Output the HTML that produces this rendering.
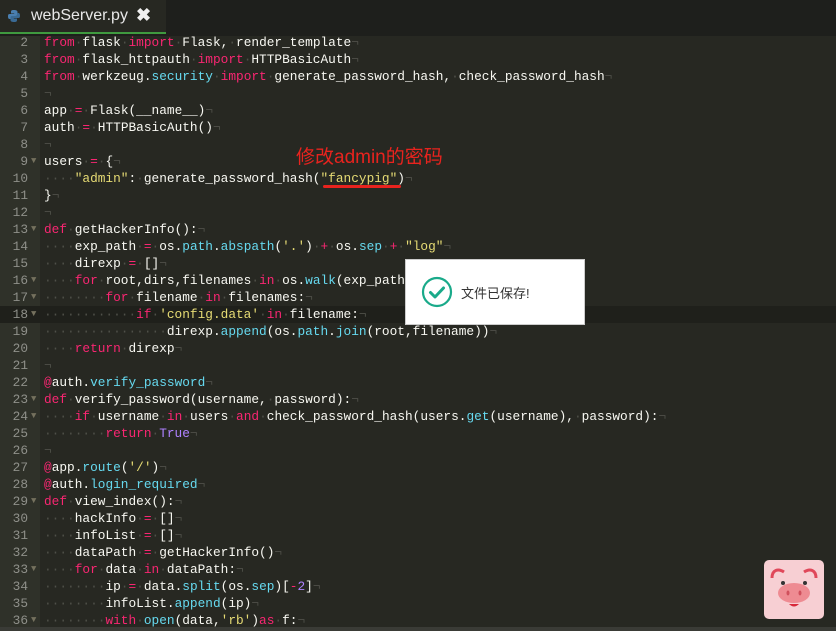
<!DOCTYPE html>
<html><head><meta charset="utf-8"><style>
*{margin:0;padding:0;box-sizing:border-box}
body{width:836px;height:631px;overflow:hidden;background:#272822;position:relative;font-family:"Liberation Mono",monospace}
.bar{position:absolute;left:0;top:0;width:836px;height:36px;background:#1e1f1c}
.tab{position:absolute;left:0;top:0;width:166px;height:34px;background:#272822;border-bottom:2px solid #3f9a3f}
.tab span{position:absolute;left:31px;top:7px;font:16px "Liberation Sans",sans-serif;color:#e8e8e8}
.tab b{position:absolute;left:136px;top:5px;font:bold 18px "Liberation Sans",sans-serif;color:#f0f0f0}
.gut{position:absolute;left:0;top:36px;width:40px;height:591px;background:#2f3129}
.hl{position:absolute;left:0;top:306px;width:836px;height:17px;background:#1f201b}
.code{position:absolute;left:0;top:34px;width:836px}
.l{height:17px;line-height:17px;font-size:12.8px;white-space:pre;position:relative;color:#f8f8f2}
.n{position:absolute;left:0;width:28px;text-align:right;color:#8f908a}
.a{position:absolute;left:31px;color:#75715e;font-size:9px}
.c{position:absolute;left:44px}
.k{color:#f92672}.f{color:#66d9ef}.s{color:#e6db74}.p{color:#ae81ff}.d{color:#4f5049}
.foot{position:absolute;left:0;top:627px;width:836px;height:4px;background:#3a3b36}
.note{position:absolute;left:296px;top:142px;font:19px "Liberation Sans","Noto Sans CJK SC",sans-serif;color:#e8231e}
.ul{position:absolute;left:323px;top:185px;width:78px;height:3px;background:#e8231e;border-radius:2px}
.toast{position:absolute;left:405px;top:259px;width:180px;height:66px;background:#fff;border:1px solid #ccc}
.toast span{position:absolute;left:55px;top:23px;font:13px "Liberation Sans","Noto Sans CJK SC",sans-serif;color:#333}
</style></head><body>
<div class="bar"></div>
<div class="tab"><svg style="position:absolute;left:7px;top:9px" width="14" height="14" viewBox="0 0 14 14"><path d="M7 1C4 1 4 2 4 3v1.5h3.2V5H2.5C1 5 1 6.5 1 7.5S1.3 10 2.5 10H4V8.5C4 7.5 5 7 6 7h3c1 0 1.5-.6 1.5-1.5V3C10.5 1.5 9 1 7 1z" fill="#4a7fb0"/><path d="M7 13c3 0 3-1 3-2V9.5H6.8V9h4.7c1.5 0 1.5-1.5 1.5-2.5S12.7 4 11.5 4H10v1.5c0 1-1 1.5-2 1.5H5c-1 0-1.5.6-1.5 1.5V11C3.5 12.5 5 13 7 13z" fill="#3a6a94"/></svg><span>webServer.py</span><b>✖</b></div>
<div class="gut"></div>
<div class="hl"></div>
<div class="code">
<div class="l"><span class="n">2</span><span class="c"><span class="k">from</span><span class="d">·</span>flask<span class="d">·</span><span class="k">import</span><span class="d">·</span>Flask,<span class="d">·</span>render_template<span class="d">¬</span></span></div>
<div class="l"><span class="n">3</span><span class="c"><span class="k">from</span><span class="d">·</span>flask_httpauth<span class="d">·</span><span class="k">import</span><span class="d">·</span>HTTPBasicAuth<span class="d">¬</span></span></div>
<div class="l"><span class="n">4</span><span class="c"><span class="k">from</span><span class="d">·</span>werkzeug.<span class="f">security</span><span class="d">·</span><span class="k">import</span><span class="d">·</span>generate_password_hash,<span class="d">·</span>check_password_hash<span class="d">¬</span></span></div>
<div class="l"><span class="n">5</span><span class="c"><span class="d">¬</span></span></div>
<div class="l"><span class="n">6</span><span class="c">app<span class="d">·</span><span class="k">=</span><span class="d">·</span>Flask(__name__)<span class="d">¬</span></span></div>
<div class="l"><span class="n">7</span><span class="c">auth<span class="d">·</span><span class="k">=</span><span class="d">·</span>HTTPBasicAuth()<span class="d">¬</span></span></div>
<div class="l"><span class="n">8</span><span class="c"><span class="d">¬</span></span></div>
<div class="l"><span class="n">9</span><span class="a">▼</span><span class="c">users<span class="d">·</span><span class="k">=</span><span class="d">·</span>{<span class="d">¬</span></span></div>
<div class="l"><span class="n">10</span><span class="c"><span class="d">····</span><span class="s">"admin"</span>:<span class="d">·</span>generate_password_hash(<span class="s">"fancypig"</span>)<span class="d">¬</span></span></div>
<div class="l"><span class="n">11</span><span class="c">}<span class="d">¬</span></span></div>
<div class="l"><span class="n">12</span><span class="c"><span class="d">¬</span></span></div>
<div class="l"><span class="n">13</span><span class="a">▼</span><span class="c"><span class="k">def</span><span class="d">·</span>getHackerInfo():<span class="d">¬</span></span></div>
<div class="l"><span class="n">14</span><span class="c"><span class="d">····</span>exp_path<span class="d">·</span><span class="k">=</span><span class="d">·</span>os.<span class="f">path</span>.<span class="f">abspath</span>(<span class="s">'.'</span>)<span class="d">·</span><span class="k">+</span><span class="d">·</span>os.<span class="f">sep</span><span class="d">·</span><span class="k">+</span><span class="d">·</span><span class="s">"log"</span><span class="d">¬</span></span></div>
<div class="l"><span class="n">15</span><span class="c"><span class="d">····</span>direxp<span class="d">·</span><span class="k">=</span><span class="d">·</span>[]<span class="d">¬</span></span></div>
<div class="l"><span class="n">16</span><span class="a">▼</span><span class="c"><span class="d">····</span><span class="k">for</span><span class="d">·</span>root,dirs,filenames<span class="d">·</span><span class="k">in</span><span class="d">·</span>os.<span class="f">walk</span>(exp_path):<span class="d">¬</span></span></div>
<div class="l"><span class="n">17</span><span class="a">▼</span><span class="c"><span class="d">········</span><span class="k">for</span><span class="d">·</span>filename<span class="d">·</span><span class="k">in</span><span class="d">·</span>filenames:<span class="d">¬</span></span></div>
<div class="l"><span class="n">18</span><span class="a">▼</span><span class="c"><span class="d">············</span><span class="k">if</span><span class="d">·</span><span class="s">'config.data'</span><span class="d">·</span><span class="k">in</span><span class="d">·</span>filename:<span class="d">¬</span></span></div>
<div class="l"><span class="n">19</span><span class="c"><span class="d">················</span>direxp.<span class="f">append</span>(os.<span class="f">path</span>.<span class="f">join</span>(root,filename))<span class="d">¬</span></span></div>
<div class="l"><span class="n">20</span><span class="c"><span class="d">····</span><span class="k">return</span><span class="d">·</span>direxp<span class="d">¬</span></span></div>
<div class="l"><span class="n">21</span><span class="c"><span class="d">¬</span></span></div>
<div class="l"><span class="n">22</span><span class="c"><span class="k">@</span>auth.<span class="f">verify_password</span><span class="d">¬</span></span></div>
<div class="l"><span class="n">23</span><span class="a">▼</span><span class="c"><span class="k">def</span><span class="d">·</span>verify_password(username,<span class="d">·</span>password):<span class="d">¬</span></span></div>
<div class="l"><span class="n">24</span><span class="a">▼</span><span class="c"><span class="d">····</span><span class="k">if</span><span class="d">·</span>username<span class="d">·</span><span class="k">in</span><span class="d">·</span>users<span class="d">·</span><span class="k">and</span><span class="d">·</span>check_password_hash(users.<span class="f">get</span>(username),<span class="d">·</span>password):<span class="d">¬</span></span></div>
<div class="l"><span class="n">25</span><span class="c"><span class="d">········</span><span class="k">return</span><span class="d">·</span><span class="p">True</span><span class="d">¬</span></span></div>
<div class="l"><span class="n">26</span><span class="c"><span class="d">¬</span></span></div>
<div class="l"><span class="n">27</span><span class="c"><span class="k">@</span>app.<span class="f">route</span>(<span class="s">'/'</span>)<span class="d">¬</span></span></div>
<div class="l"><span class="n">28</span><span class="c"><span class="k">@</span>auth.<span class="f">login_required</span><span class="d">¬</span></span></div>
<div class="l"><span class="n">29</span><span class="a">▼</span><span class="c"><span class="k">def</span><span class="d">·</span>view_index():<span class="d">¬</span></span></div>
<div class="l"><span class="n">30</span><span class="c"><span class="d">····</span>hackInfo<span class="d">·</span><span class="k">=</span><span class="d">·</span>[]<span class="d">¬</span></span></div>
<div class="l"><span class="n">31</span><span class="c"><span class="d">····</span>infoList<span class="d">·</span><span class="k">=</span><span class="d">·</span>[]<span class="d">¬</span></span></div>
<div class="l"><span class="n">32</span><span class="c"><span class="d">····</span>dataPath<span class="d">·</span><span class="k">=</span><span class="d">·</span>getHackerInfo()<span class="d">¬</span></span></div>
<div class="l"><span class="n">33</span><span class="a">▼</span><span class="c"><span class="d">····</span><span class="k">for</span><span class="d">·</span>data<span class="d">·</span><span class="k">in</span><span class="d">·</span>dataPath:<span class="d">¬</span></span></div>
<div class="l"><span class="n">34</span><span class="c"><span class="d">········</span>ip<span class="d">·</span><span class="k">=</span><span class="d">·</span>data.<span class="f">split</span>(os.<span class="f">sep</span>)[<span class="k">-</span><span class="p">2</span>]<span class="d">¬</span></span></div>
<div class="l"><span class="n">35</span><span class="c"><span class="d">········</span>infoList.<span class="f">append</span>(ip)<span class="d">¬</span></span></div>
<div class="l"><span class="n">36</span><span class="a">▼</span><span class="c"><span class="d">········</span><span class="k">with</span><span class="d">·</span><span class="f">open</span>(data,<span class="s">'rb'</span>)<span class="k">as</span><span class="d">·</span>f:<span class="d">¬</span></span></div>
</div>
<div class="note">修改admin的密码</div>
<div class="ul"></div>
<div class="toast"><svg style="position:absolute;left:15px;top:16px" width="32" height="32" viewBox="0 0 32 32"><circle cx="16" cy="16" r="14" fill="none" stroke="#1aaa8a" stroke-width="2.2"/><path d="M9.5 16.5l4.5 4.5 8.5-9" fill="none" stroke="#1aaa8a" stroke-width="3" stroke-linecap="round" stroke-linejoin="round"/></svg><span>文件已保存!</span></div>
<svg style="position:absolute;left:764px;top:560px" width="60" height="59" viewBox="0 0 60 59"><rect x="0" y="0" width="60" height="59" rx="5" fill="#f7cfd3"/><path d="M8 18c0-8 6-10 12-6" fill="none" stroke="#e0485a" stroke-width="3"/><path d="M52 18c0-8-6-10-12-6" fill="none" stroke="#e0485a" stroke-width="3"/><circle cx="19" cy="23" r="2" fill="#333"/><circle cx="41" cy="23" r="2" fill="#333"/><ellipse cx="30" cy="33" rx="16" ry="10" fill="#ee8b92"/><ellipse cx="24" cy="33" rx="1.5" ry="2.5" fill="#d0505c"/><ellipse cx="36" cy="33" rx="1.5" ry="2.5" fill="#d0505c"/><path d="M25 44q5 5 10 0z" fill="#d8283a"/></svg>
<div class="foot"></div>
</body></html>
